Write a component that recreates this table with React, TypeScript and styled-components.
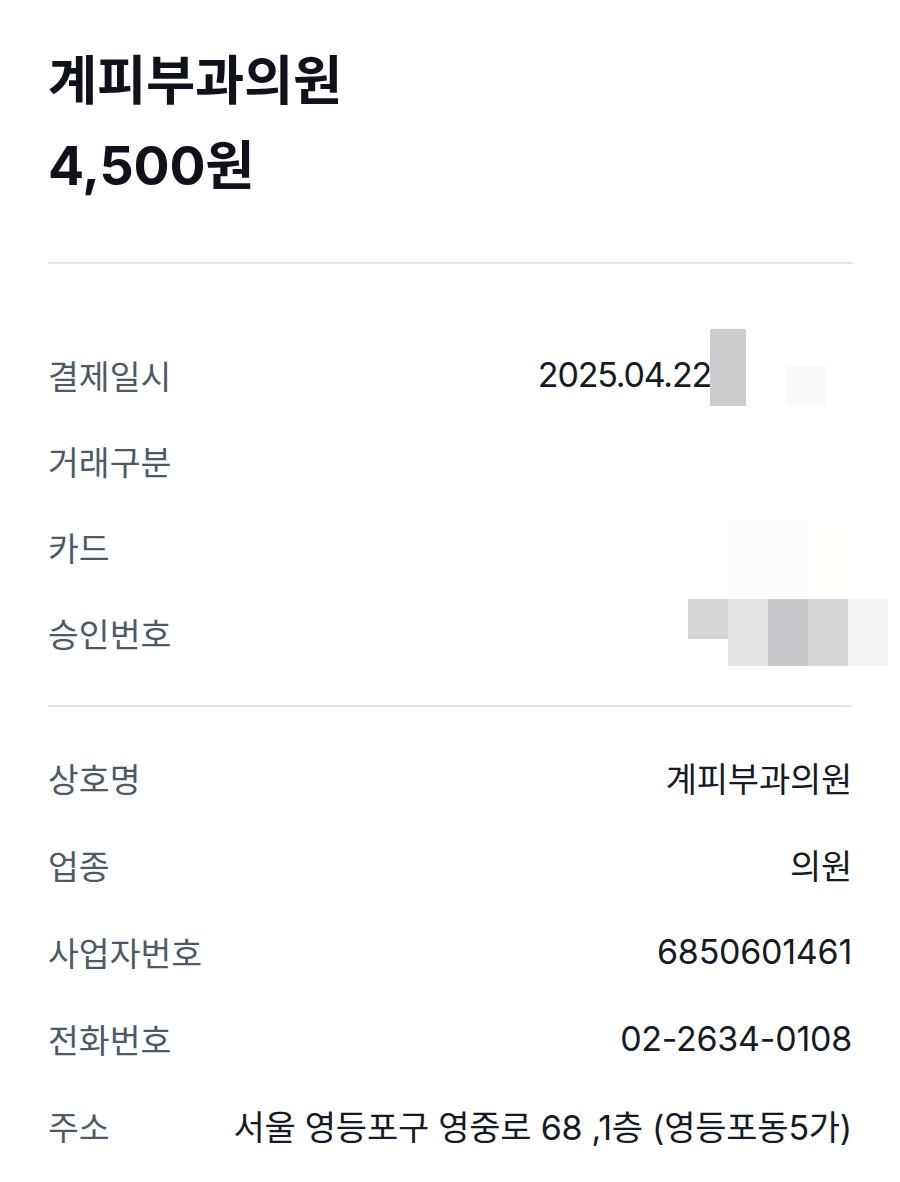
import React from "react";
import styled, { createGlobalStyle } from "styled-components";

const GlobalStyle = createGlobalStyle`
  html, body {
    margin: 0;
    padding: 0;
    background: #ffffff;
  }
  body {
    font-family: Inter, "Noto Sans CJK KR", "Noto Sans", sans-serif;
    -webkit-font-smoothing: antialiased;
  }
`;

const Page = styled.div`
  position: relative;
  width: 900px;
  min-height: 1182px;
  box-sizing: border-box;
  padding: 38px 48px 0;
  display: flex;
  flex-direction: column;
`;

const Header = styled.header`
  display: flex;
  flex-direction: column;
`;

const Title = styled.h1`
  margin: 0;
  font-size: 53.5px;
  line-height: 85px;
  font-weight: 700;
  letter-spacing: -0.2px;
  color: #10121b;
`;

const Divider = styled.hr<{ $top: number; $bottom: number }>`
  border: none;
  height: 2px;
  background: #e3e6ee;
  margin: ${p => p.$top}px 0 ${p => p.$bottom}px;
`;

const Section = styled.section`
  display: flex;
  flex-direction: column;
`;

const Row = styled.div<{ $h: number }>`
  height: ${p => p.$h}px;
  display: flex;
  align-items: center;
  justify-content: space-between;
  gap: 24px;
`;

const Label = styled.span`
  font-size: 33.5px;
  color: #4e5968;
  white-space: nowrap;
`;

const Value = styled.span<{ $trail?: number; $tracking?: number }>`
  font-size: 34px;
  letter-spacing: ${p => p.$tracking ?? -0.25}px;
  color: #161a24;
  white-space: nowrap;
  text-align: right;
  padding-right: ${p => p.$trail ?? 0}px;
`;

const Mosaic = styled.div`
  position: absolute;
  inset: 0;
  pointer-events: none;
`;

const Tile = styled.div<{ $color: string }>`
  position: absolute;
  background: ${p => p.$color};
`;

const tiles = [
  { x: 710, y: 329, w: 36, h: 77, c: "#cdcdd0" },
  { x: 786, y: 366, w: 40, h: 39, c: "#f9f9f9" },
  { x: 728, y: 519, w: 80, h: 79, c: "#fcfcfc" },
  { x: 808, y: 519, w: 40, h: 79, c: "#fffffb" },
  { x: 688, y: 599, w: 40, h: 40, c: "#d5d6d8" },
  { x: 728, y: 599, w: 40, h: 67, c: "#e4e4e6" },
  { x: 768, y: 599, w: 40, h: 67, c: "#c8c8cc" },
  { x: 808, y: 599, w: 40, h: 67, c: "#d6d6d8" },
  { x: 848, y: 599, w: 40, h: 67, c: "#f3f3f3" },
];

const payment = [
  { label: "결제일시", value: "2025.04.22", trail: 141, tracking: -1.2 },
  { label: "거래구분", value: "" },
  { label: "카드", value: "" },
  { label: "승인번호", value: "" },
];

const merchant = [
  { label: "상호명", value: "계피부과의원" },
  { label: "업종", value: "의원" },
  { label: "사업자번호", value: "6850601461" },
  { label: "전화번호", value: "02-2634-0108" },
  { label: "주소", value: "서울 영등포구 영중로 68 ,1층 (영등포동5가)" },
];

const App: React.FC = () => {
  return (
    <>
      <GlobalStyle />
      <Page>
        <Header>
          <Title>계피부과의원</Title>
          <Title>4,500원</Title>
        </Header>

        <Divider $top={54} $bottom={67} />

        <Section>
          {payment.map(item => (
            <Row key={item.label} $h={86}>
              <Label>{item.label}</Label>
              <Value $trail={item.trail} $tracking={item.tracking}>
                {item.value}
              </Value>
            </Row>
          ))}
        </Section>

        <Divider $top={30} $bottom={27} />

        <Section>
          {merchant.map(item => (
            <Row key={item.label} $h={87}>
              <Label>{item.label}</Label>
              <Value>{item.value}</Value>
            </Row>
          ))}
        </Section>

        <Mosaic>
          {tiles.map((t, i) => (
            <Tile
              key={i}
              $color={t.c}
              style={{ left: t.x, top: t.y, width: t.w, height: t.h }}
            />
          ))}
        </Mosaic>
      </Page>
    </>
  );
};

export default App;
